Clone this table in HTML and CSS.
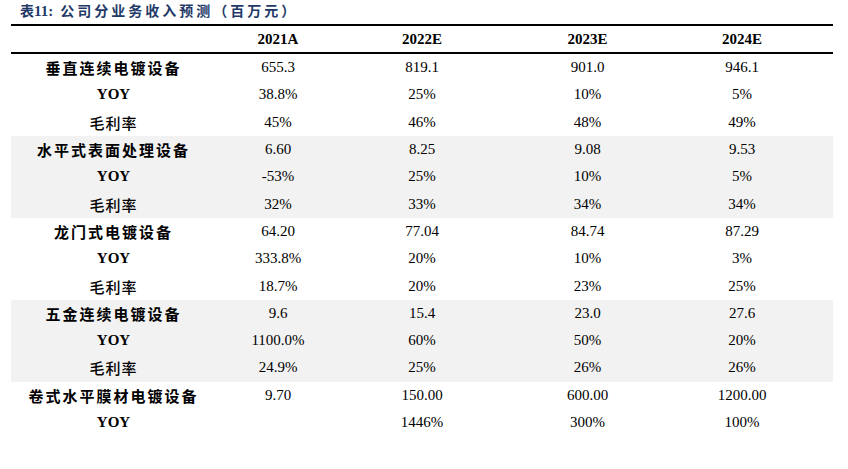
FILE: index.html
```html
<!DOCTYPE html>
<html lang="zh">
<head>
<meta charset="utf-8">
<link rel="stylesheet" href="styles.css">
</head>
<body>
<div class="title"><span class="cjk">表</span><span class="num">11:</span><span class="cjk sp">公司分业务收入预测（百万元）</span></div>
<table class="tbl">
  <colgroup>
    <col class="c1"><col class="c2"><col class="c3"><col class="c4"><col class="c5">
  </colgroup>
  <thead>
    <tr><th></th><th>2021A</th><th>2022E</th><th>2023E</th><th class="last">2024E</th></tr>
  </thead>
  <tbody>
    <tr><td class="lbl sec">垂直连续电镀设备</td><td>655.3</td><td>819.1</td><td>901.0</td><td class="last">946.1</td></tr>
    <tr><td class="lbl yoy">YOY</td><td>38.8%</td><td>25%</td><td>10%</td><td class="last">5%</td></tr>
    <tr><td class="lbl gm">毛利率</td><td>45%</td><td>46%</td><td>48%</td><td class="last">49%</td></tr>
    <tr class="shade"><td class="lbl sec">水平式表面处理设备</td><td>6.60</td><td>8.25</td><td>9.08</td><td class="last">9.53</td></tr>
    <tr class="shade"><td class="lbl yoy">YOY</td><td>-53%</td><td>25%</td><td>10%</td><td class="last">5%</td></tr>
    <tr class="shade"><td class="lbl gm">毛利率</td><td>32%</td><td>33%</td><td>34%</td><td class="last">34%</td></tr>
    <tr><td class="lbl sec">龙门式电镀设备</td><td>64.20</td><td>77.04</td><td>84.74</td><td class="last">87.29</td></tr>
    <tr><td class="lbl yoy">YOY</td><td>333.8%</td><td>20%</td><td>10%</td><td class="last">3%</td></tr>
    <tr><td class="lbl gm">毛利率</td><td>18.7%</td><td>20%</td><td>23%</td><td class="last">25%</td></tr>
    <tr class="shade"><td class="lbl sec">五金连续电镀设备</td><td>9.6</td><td>15.4</td><td>23.0</td><td class="last">27.6</td></tr>
    <tr class="shade"><td class="lbl yoy">YOY</td><td>1100.0%</td><td>60%</td><td>50%</td><td class="last">20%</td></tr>
    <tr class="shade"><td class="lbl gm">毛利率</td><td>24.9%</td><td>25%</td><td>26%</td><td class="last">26%</td></tr>
    <tr><td class="lbl sec">卷式水平膜材电镀设备</td><td>9.70</td><td>150.00</td><td>600.00</td><td class="last">1200.00</td></tr>
    <tr><td class="lbl yoy">YOY</td><td></td><td>1446%</td><td>300%</td><td class="last">100%</td></tr>
  </tbody>
</table>
</body>
</html>
```

FILE: styles.css
```css
html, body {
  margin: 0;
  padding: 0;
  background: #ffffff;
}
body {
  padding: 0 0 0 11px;
  font-family: "Liberation Serif", "Noto Sans CJK SC", serif;
  color: #000;
}
.title {
  height: 24px;
  padding: 1px 0 0 9px;
  box-sizing: border-box;
  line-height: 18px;
  color: #1f3a68;
  font-weight: 700;
  font-size: 14px;
  white-space: nowrap;
}
.title .cjk {
  font-family: "Noto Sans CJK SC", sans-serif;
  font-weight: 700;
}
.title .num {
  font-family: "Liberation Serif", serif;
  font-size: 15px;
  margin-right: 7px;
}
.title .sp {
  letter-spacing: 3px;
}
.tbl {
  border-collapse: collapse;
  table-layout: fixed;
  width: 822px;
  border-top: 2px solid #000;
}
.c1 { width: 205px; }
.c2 { width: 124px; }
.c3 { width: 164px; }
.c4 { width: 167px; }
.c5 { width: 162px; }
.tbl th {
  height: 26px;
  padding: 0;
  font-family: "Liberation Serif", serif;
  font-weight: 700;
  font-size: 15px;
  text-align: center;
  border-bottom: 2px solid #000;
  vertical-align: middle;
}
.tbl td {
  height: 27.3px;
  padding: 0;
  font-size: 15px;
  text-align: center;
  vertical-align: middle;
  white-space: nowrap;
}
.tbl .last {
  padding-right: 20px;
}
.tbl tr.shade td {
  background: #f2f2f2;
}
.lbl.sec {
  font-family: "Noto Sans CJK SC", sans-serif;
  font-weight: 700;
  letter-spacing: 2px;
}
.lbl.gm {
  font-family: "Noto Sans CJK SC", sans-serif;
  font-weight: 500;
  letter-spacing: 1px;
}
.lbl.yoy {
  font-family: "Liberation Serif", serif;
  font-weight: 700;
}
```
